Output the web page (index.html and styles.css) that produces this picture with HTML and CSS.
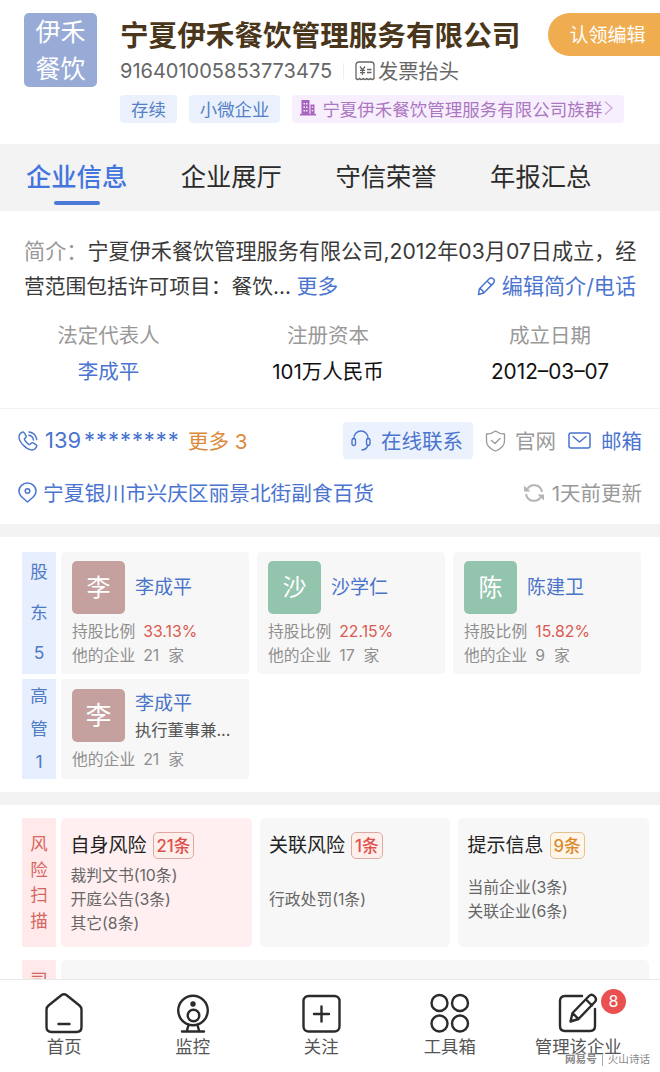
FILE: index.html
```html
<!DOCTYPE html>
<html lang="zh-CN">
<head>
    <meta charset="UTF-8">
    <meta name="viewport" content="width=device-width, initial-scale=1.0">
    <title>宁夏伊禾餐饮管理服务有限公司</title>
    <link rel="stylesheet" href="styles.css">
</head>
<body>
    <main class="page">
        <header class="company">
            <div class="logo">伊禾<br>餐饮</div>
            <div class="company-info">
                <h1>宁夏伊禾餐饮管理服务有限公司</h1>
                <div class="code-row">
                    <span class="code">916401005853773475</span>
                    <span class="code-line"></span>
                    <svg class="icon-invoice" width="20" height="20" viewBox="0 0 20 20" fill="none" stroke="#666" stroke-width="1.3">
                        <path d="M1 17.5V4a3 3 0 0 1 3-3h12a3 3 0 0 1 3 3v13.500q-1.800 2-3.600 0q-1.800 2-3.600 0q-1.800 2-3.600 0q-1.800 2-3.600 0q-1.800 2-3.600 0z"/>
                        <path d="M5 5.500l2.500 3.500l2.500-3.500M7.500 9v5M5 9.300h5M5 11.600h5M12 8.500h4.500M12 11.500h4.500"/>
                    </svg>
                    <span class="invoice">发票抬头</span>
                </div>
                <div class="tags">
                    <span class="tag">存续</span>
                    <span class="tag">小微企业</span>
                    <span class="tag tag-group">
                        <svg width="16" height="16" viewBox="0 0 16 16">
                            <path fill="#a964bd" fill-rule="evenodd" d="M1.500 0h8v14h1V4.500h4V14H16v1.500H0V14h1.500zM3.500 3v1.500h1.500V3zm2.500 0v1.500h1.500V3zm-2.500 3.500V8h1.500V6.500zm2.500 0V8h1.500V6.500zM3.500 10v1.500h1.500V10zm2.500 0v1.500h1.500V10zm5.800-3.500v1.200h1.400V6.500zm0 3.500v1.200h1.400V10z"/>
                        </svg>
                        <span>宁夏伊禾餐饮管理服务有限公司族群</span>
                        <svg width="9" height="14" viewBox="0 0 9 14" fill="none" stroke="#c9a5d6" stroke-width="1.2"><path d="M1 .5l7 6.500l-7 6.500"/></svg>
                    </span>
                </div>
            </div>
            <button class="claim-btn">认领编辑</button>
        </header>

        <nav class="tabs">
            <a class="tab active">企业信息</a>
            <a class="tab">企业展厅</a>
            <a class="tab">守信荣誉</a>
            <a class="tab">年报汇总</a>
        </nav>

        <section class="intro">
            <p><span class="muted">简介：</span><span class="intro-name">宁夏伊禾餐饮管理服务有限公司,</span><span class="intro-date">2012年03月07日成立，经</span></p>
            <div class="intro-row">
                <p>营范围包括许可项目：餐饮... <a class="link">更多</a></p>
                <a class="link edit">
                    <svg width="19" height="19" viewBox="0 0 18 19" fill="none" stroke="#4a74cf" stroke-width="1.5" stroke-linejoin="round">
                        <path d="M1 17.500l.8-5.500L11.500 2q2.200-2 4.300-.2q2 2 .2 4.300L6.200 16z M9.500 4l4.500 4.300M1.800 12q3.300.2 4.400 4"/>
                    </svg>编辑简介/电话</a>
            </div>
        </section>

        <section class="facts">
            <div class="fact"><span class="fact-label">法定代表人</span><a class="link">李成平</a></div>
            <div class="fact"><span class="fact-label">注册资本</span><span>101万人民币</span></div>
            <div class="fact"><span class="fact-label">成立日期</span><span class="fact-date">2012–03–07</span></div>
        </section>

        <section class="contact">
            <div class="contact-row">
                <svg width="20" height="20" viewBox="0 0 20 20" fill="none" stroke="#4a74cf" stroke-width="1.400" stroke-linecap="round" stroke-linejoin="round">
                    <path d="M4.200 1.200q1-.6 1.800.5l2 3q.6 1-.3 1.800l-1 1q-.6.7 0 1.600q1.600 2.700 4.200 4.200q.9.500 1.500-.2l1-1q.8-.8 1.800-.2l3 2q1 .8.300 1.900q-2 3.500-5.400 3.100q-4-.6-8-4.800T1 6q-.1-3 3.200-4.800z"/>
                    <path d="M11 1q6.500.8 7.800 7.500M10.800 4.300q3.900.7 4.700 4.700"/>
                </svg>
                <span class="phone">139</span><span class="stars">********</span>
                <span class="more-phone">更多 3</span>
                <span class="chat">
                    <svg width="20" height="21" viewBox="0 0 20 21" fill="none" stroke="#4a74cf" stroke-width="1.400" stroke-linecap="round">
                        <path d="M3 9V8a7 7 0 0 1 14 0v1M17 15q-1 4.500-6 5"/>
                        <rect x="1" y="8.500" width="3.500" height="7" rx="1.700"/><rect x="15.500" y="8.500" width="3.500" height="7" rx="1.700"/>
                    </svg><span class="text">在线联系</span></span>
                <span class="contact-item gray">
                    <svg width="21" height="22" viewBox="0 0 21 22" fill="none" stroke="#999" stroke-width="1.300" stroke-linejoin="round" stroke-linecap="round">
                        <path d="M10.500 1q4 3 9 3v7q0 6.500-9 10q-9-3.500-9-10V4q5 0 9-3zM6.500 10.500l3.500 3l5-5"/>
                    </svg><span class="text">官网</span></span>
                <span class="contact-item mail">
                    <svg width="23" height="17" viewBox="0 0 23 17" fill="none" stroke="#4a74cf" stroke-width="1.500" stroke-linejoin="round" stroke-linecap="round">
                        <rect x="1" y="1" width="21" height="15" rx="2"/><path d="M5 4.500l6.500 5.500L18 4.500"/>
                    </svg><span class="text">邮箱</span></span>
            </div>
            <div class="contact-row address-row">
                <svg width="19" height="21" viewBox="0 0 19 21" fill="none" stroke="#4a74cf" stroke-width="1.500">
                    <path d="M5.500 16.500Q1 13 1 9a8.500 8 0 0 1 17 0q0 4-4.500 7.500L9.500 20z" stroke-linejoin="round"/><circle cx="9.500" cy="9" r="2.300"/>
                </svg>
                <span class="address">宁夏银川市兴庆区丽景北街副食百货</span>
                <span class="updated">
                    <svg width="22" height="20" viewBox="0 0 22 20" fill="none" stroke="#b5b5b5" stroke-width="2">
                        <path d="M4 6.500a8 8 0 0 1 15 2.500M18 13.500A8 8 0 0 1 3 11"/>
                        <path fill="#b5b5b5" stroke="none" d="M1 2.500v6h6.500zM21 17.500v-6h-6.500z"/>
                    </svg><span class="text">1天前更新</span></span>
            </div>
        </section>

        <section class="people">
            <div class="row">
                <div class="side side-holders"><span>股</span><span>东</span><span>5</span></div>
                <div class="cards">
                    <div class="card">
                        <div class="person"><span class="avatar rose">李</span><a class="name">李成平</a></div>
                        <p>持股比例<b class="percent">33.13%</b></p>
                        <p>他的企业<span class="count">21</span>家</p>
                    </div>
                    <div class="card">
                        <div class="person"><span class="avatar green">沙</span><a class="name">沙学仁</a></div>
                        <p>持股比例<b class="percent">22.15%</b></p>
                        <p>他的企业<span class="count">17</span>家</p>
                    </div>
                    <div class="card">
                        <div class="person"><span class="avatar green">陈</span><a class="name">陈建卫</a></div>
                        <p>持股比例<b class="percent">15.82%</b></p>
                        <p>他的企业<span class="count">9</span>家</p>
                    </div>
                </div>
            </div>
            <div class="row row-managers">
                <div class="side side-managers"><span>高</span><span>管</span><span>1</span></div>
                <div class="cards">
                    <div class="card">
                        <div class="person">
                            <span class="avatar rose big">李</span>
                            <div class="post"><a class="name">李成平</a><span class="job">执行董事兼...</span></div>
                        </div>
                        <p>他的企业<span class="count">21</span>家</p>
                    </div>
                </div>
            </div>
        </section>

        <section class="risk">
            <div class="row">
                <div class="side side-risk"><span>风</span><span>险</span><span>扫</span><span>描</span></div>
                <div class="cards">
                    <div class="risk-card own">
                        <h2>自身风险<span class="badge">21条</span></h2>
                        <p>裁判文书(10条)</p>
                        <p>开庭公告(3条)</p>
                        <p>其它(8条)</p>
                    </div>
                    <div class="risk-card one">
                        <h2>关联风险<span class="badge">1条</span></h2>
                        <p>行政处罚(1条)</p>
                    </div>
                    <div class="risk-card two">
                        <h2>提示信息<span class="badge orange">9条</span></h2>
                        <p>当前企业(3条)</p>
                        <p>关联企业(6条)</p>
                    </div>
                </div>
            </div>
            <div class="row row-next">
                <div class="side side-law"><span>司</span></div>
                <div class="next-card"></div>
            </div>
        </section>
    </main>

    <footer class="bottom-nav">
        <a class="nav-item">
            <svg width="40" height="42" viewBox="0 0 40 42" class="nav-icon">
                <path d="M17 3.500q3-2.300 6 0l12.500 10q2 1.700 2 4V35q0 5-5 5h-25q-5 0-5-5V17.500q0-2.300 2-4zM14.500 32h11"/>
            </svg>首页</a>
        <a class="nav-item">
            <svg width="40" height="42" viewBox="0 0 40 42" class="nav-icon">
                <circle cx="20" cy="18.500" r="14.800"/><circle cx="20.500" cy="23.500" r="5.800"/><circle cx="20" cy="12" r="1.500" fill="#2b2b2b"/>
                <path d="M15.500 33l-1.500 5.500M24.500 33l1.500 5.500M9 39.500h22"/>
            </svg>监控</a>
        <a class="nav-item">
            <svg width="40" height="42" viewBox="0 0 40 42" class="nav-icon">
                <rect x="2.500" y="4" width="36" height="35.500" rx="5"/><path d="M20.500 14.500v15M13 22h15"/>
            </svg>关注</a>
        <a class="nav-item">
            <svg width="40" height="42" viewBox="0 0 40 42" class="nav-icon">
                <circle cx="9.500" cy="11" r="8"/><circle cx="30" cy="11" r="8"/><circle cx="9.500" cy="31.500" r="8"/><circle cx="30" cy="31.500" r="8"/>
            </svg>工具箱</a>
        <a class="nav-item">
            <svg width="40" height="42" viewBox="0 0 40 42" class="nav-icon">
                <path d="M24 4H7q-5 0-5 5v25q0 5 5 5h25q5 0 5-5V17"/>
                <path d="M12.500 29.500l2-8.500L31 4q2.500-2.500 5.500.3q2.800 3 .3 5.700L20.500 27zM28 7.500l6 6M14.500 21l6 6"/>
            </svg>管理该企业
            <span class="nav-badge">8</span></a>
        <div class="watermark"><span class="wm-logo">网易号</span><i></i><span>火山诗话</span></div>
    </footer>
</body>
</html>
```
FILE: styles.css
```css
* {
    box-sizing: border-box;
}

body {
    margin: 0;
    width: 660px;
    height: 1072px;
    display: flex;
    flex-direction: column;
    overflow: hidden;
    background: #fff;
    color: #3a3a3a;
    font-family: Inter, "Noto Sans CJK SC", sans-serif;
}

h1, h2, p {
    margin: 0;
    font-weight: 400;
}

svg {
    flex: none;
}

.page {
    flex: 1;
    min-height: 0;
    overflow: hidden;
}

.link {
    color: #4a74cf;
}

/* Company header */
.company {
    height: 144px;
    padding: 13px 0 0 24px;
    display: flex;
}

.logo {
    flex: none;
    width: 73px;
    height: 74px;
    padding-top: 1px;
    border-radius: 5px;
    background: #97abd6;
    color: #fff;
    font-size: 25px;
    line-height: 37px;
    text-align: center;
}

.company-info {
    flex: none;
    width: 451px;
    padding-left: 23px;
    white-space: nowrap;
}

h1 {
    height: 44px;
    color: #49361b;
    font-size: 28.6px;
    font-weight: 600;
    line-height: 46px;
}

.code-row {
    display: flex;
    align-items: center;
    height: 28px;
    color: #666;
    font-size: 20.3px;
}

.code {
    width: 212px;
    font-size: 20px;
}

.code-line {
    width: 1px;
    height: 16px;
    margin: 0 11px 0 11px;
    background: #eee;
}

.invoice {
    margin-left: 3px;
    padding-bottom: 2px;
}

.tags {
    display: flex;
    gap: 12px;
    margin-top: 10px;
}

.tag {
    display: flex;
    align-items: center;
    height: 28px;
    padding: 0 11px 2px;
    border-radius: 4px;
    background: #eaf1fd;
    color: #5580c5;
    font-size: 17.4px;
}

.tag-group {
    padding: 0 11px 2px 8px;
    gap: 6px;
    background: #f7effe;
    color: #ac77bf;
    font-size: 17.5px;
}

.tag-group svg + span {
    margin-right: -4px;
}

.claim-btn {
    flex: none;
    width: 112px;
    height: 43px;
    padding: 0 0 2px 7px;
    border: 0;
    border-radius: 22px 0 0 22px;
    background: #f0ad50;
    color: #fff;
    font-family: inherit;
    font-size: 19px;
}

/* Tabs */
.tabs {
    display: flex;
    gap: 53.5px;
    height: 67px;
    padding-left: 26px;
    background: #f3f3f3;
}

.tab {
    position: relative;
    color: #2b2b2b;
    font-size: 25.3px;
    line-height: 66px;
}

.tab.active {
    color: #4375df;
    font-weight: 500;
}

.tab.active::after {
    content: "";
    position: absolute;
    left: 28px;
    top: 57px;
    width: 46px;
    height: 4px;
    border-radius: 2px;
    background: #4a7ad6;
}

/* Introduction */
.intro {
    padding: 23px 24px 0;
    font-size: 21.15px;
    line-height: 35px;
    white-space: nowrap;
}

.muted {
    color: #999;
}

.intro-row {
    display: flex;
    justify-content: space-between;
    font-size: 20.75px;
}

.edit {
    display: flex;
    align-items: center;
    gap: 6px;
    font-size: 21.1px;
}

.facts {
    display: flex;
    height: 105px;
    padding: 14px 0 0;
    border-bottom: 1px solid #f1f1f1;
    color: #111;
    font-size: 20.5px;
}

.fact {
    flex: none;
    width: 222px;
    display: flex;
    flex-direction: column;
    align-items: center;
    line-height: 36px;
}

.fact:first-child {
    width: 217px;
}

.fact-label {
    color: #999;
}

.fact-date {
    font-size: 20.8px;
}

/* Contacts */
.contact {
    height: 128px;
    border-bottom: 13px solid #f3f3f3;
    padding: 13px 18px 0;
}

.contact-row {
    display: flex;
    align-items: center;
    height: 37px;
    color: #4a74cf;
    font-size: 20.5px;
    white-space: nowrap;
}

.text {
    padding-bottom: 2px;
}

.phone {
    width: 39px;
    margin-left: 7px;
    padding-bottom: 2px;
    font-size: 22px;
}

.stars {
    width: 97px;
    padding-bottom: 2px;
    font-size: 22px;
    letter-spacing: .95px;
}

.more-phone {
    margin-left: 7px;
    padding-bottom: 2px;
    color: #db8a3c;
}

.chat {
    display: flex;
    align-items: center;
    gap: 10px;
    height: 37px;
    margin-left: auto;
    padding: 0 10px 0 8px;
    border-radius: 4px;
    background: #ebf2fd;
}

.contact-item {
    display: flex;
    align-items: center;
    gap: 9px;
    margin-left: 12px;
}

.mail {
    gap: 10px;
}

.gray {
    color: #999;
}

.address-row {
    margin-top: 15px;
}

.address {
    margin-left: 6px;
    padding-bottom: 1px;
    font-size: 20.7px;
}

.updated {
    display: flex;
    align-items: center;
    gap: 7px;
    margin-left: auto;
    color: #999;
}

/* Shareholders and managers */
.people {
    height: 268px;
    padding: 15px 0 0 22px;
    border-bottom: 13px solid #f3f3f3;
}

.row {
    display: flex;
    gap: 5px;
    height: 122px;
}

.row-managers {
    height: 100px;
    margin-top: 5px;
}

.side {
    display: flex;
    flex: none;
    flex-direction: column;
    align-items: center;
    width: 34px;
    background: #e7eefe;
    color: #4f7bc4;
    font-size: 17.5px;
}

.side-holders {
    line-height: 40.5px;
}

.side-managers {
    line-height: 33px;
}

.cards {
    display: flex;
    gap: 8px;
}

.card {
    width: 188px;
    padding: 9px 0 0 11px;
    border-radius: 4px;
    background: #f7f7f7;
    color: #8f8f8f;
    font-size: 15.8px;
    line-height: 24px;
    white-space: nowrap;
}

.person {
    display: flex;
    align-items: center;
    gap: 10px;
    margin-bottom: 6px;
}

.avatar {
    width: 53px;
    height: 53px;
    border-radius: 5px;
    color: #fff;
    font-size: 24px;
    line-height: 53px;
    text-align: center;
}

.avatar.big {
    font-size: 26px;
}

.rose {
    background: #c4a09f;
}

.green {
    background: #93c4ad;
}

.name {
    color: #4a74c9;
    font-size: 19px;
}

.percent {
    margin-left: 8px;
    color: #dc5a50;
    font-weight: 400;
}

.count {
    margin: 0 9px 0 8px;
}

.post {
    display: flex;
    flex-direction: column;
    padding-top: 2px;
}

.post .name {
    line-height: 28px;
}

.job {
    color: #555;
    font-size: 16.3px;
}

/* Risk scan */
.risk {
    padding: 13px 0 0 22px;
}

.risk .row {
    height: 129px;
}

.side-risk {
    padding-top: 13px;
    background: #ffe9ea;
    color: #d46660;
    line-height: 25.5px;
}

.risk-card {
    width: 190.5px;
    padding: 12px 0 0 9.5px;
    border-radius: 5px;
    background: #f7f7f7;
    color: #666;
    font-size: 15.8px;
    line-height: 24px;
    white-space: nowrap;
}

.risk-card h2 {
    display: flex;
    align-items: center;
    height: 32px;
    margin-bottom: 2px;
    color: #222;
    font-size: 19px;
}

.risk-card.own {
    background: #ffeff0;
}

.risk-card.one h2 {
    margin-bottom: 26px;
}

.risk-card.two h2 {
    margin-bottom: 14px;
}

.badge {
    height: 27px;
    margin: -2px 0 0 6px;
    padding: 0 3px;
    border: 1px solid #dbaaa6;
    border-radius: 5px;
    background: #ffefeb;
    color: #dd504d;
    font-size: 16.7px;
    font-weight: 500;
    line-height: 26px;
}

.badge.orange {
    border-color: #e3c294;
    background: #fff5e8;
    color: #d98a2f;
}

.risk .row-next {
    height: 60px;
    margin-top: 13px;
}

.side-law {
    padding-top: 6px;
    background: #ffe9ea;
    color: #d46660;
}

.next-card {
    width: 588px;
    border-radius: 5px;
    background: #f7f7f7;
}

/* Bottom navigation */
.bottom-nav {
    position: relative;
    display: flex;
    flex: none;
    height: 93px;
    padding: 12px 17px 0 0;
    border-top: 1px solid #e9e9e9;
    background: #fff;
}

.nav-item {
    position: relative;
    display: flex;
    flex: none;
    flex-direction: column;
    align-items: center;
    width: 128.5px;
    color: #555;
    font-size: 17.4px;
    line-height: 26px;
    white-space: nowrap;
}

.nav-icon {
    fill: none;
    stroke: #2b2b2b;
    stroke-width: 2.4;
    stroke-linecap: round;
    stroke-linejoin: round;
}

.nav-badge {
    position: absolute;
    left: 87px;
    top: -3px;
    width: 25px;
    height: 25px;
    border-radius: 50%;
    background: #e9504f;
    color: #fff;
    font-size: 16px;
    line-height: 25px;
    text-align: center;
}

.watermark {
    position: absolute;
    left: 565px;
    top: 72px;
    display: flex;
    align-items: center;
    color: #888;
    font-size: 10.6px;
    line-height: 16px;
    text-shadow: 0 0 1px #fff, 0 0 2px #fff;
}

.wm-logo {
    font-weight: 700;
}

.watermark i {
    width: 1px;
    height: 11px;
    margin: 0 5px;
    background: #aaa;
}
```
